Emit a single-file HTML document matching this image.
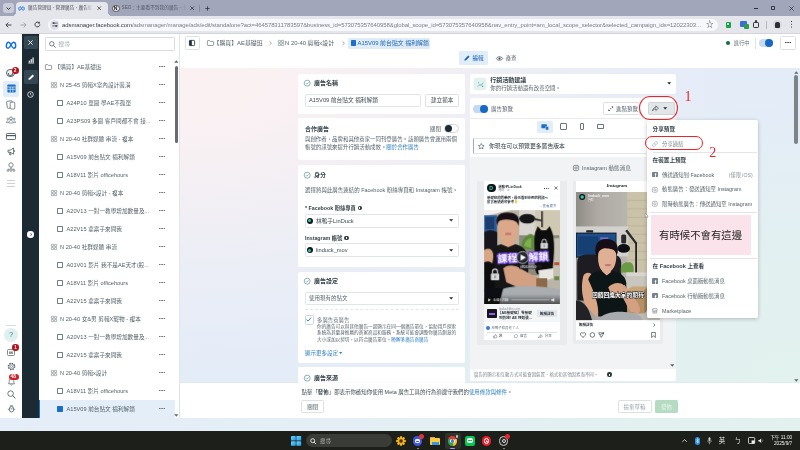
<!DOCTYPE html>
<html lang="zh-Hant">
<head>
<meta charset="utf-8">
<title>廣告管理員</title>
<style>
*{box-sizing:border-box;margin:0;padding:0}
html,body{width:800px;height:450px;overflow:hidden;background:#fff}
body{position:relative;font-family:"Liberation Sans","Noto Sans CJK TC",sans-serif;font-size:5.8px;color:#56636b;line-height:1}
.a{position:absolute}
.t{position:absolute;white-space:nowrap;line-height:8px;height:8px}
.b{font-weight:700;color:#36434b}
svg{position:absolute;overflow:visible}
/* browser chrome */
#tabbar{left:0;top:0;width:800px;height:16px;background:#a2a6bb}
#acttab{left:16px;top:2px;width:92px;height:14px;background:#e5e6eb;border-radius:4px 4px 0 0}
#toolbar{left:0;top:15.5px;width:800px;height:18px;background:#e5e6eb}
#url{left:47.5px;top:18.5px;width:670px;height:12.5px;background:#f7f8fb;border-radius:6.5px}
/* page */
#leftnav{left:0;top:33.5px;width:22px;height:385px;background:#fff}
#darkbar{left:22px;top:33.5px;width:17px;height:385px;background:#1c2b33}
#tree{left:39px;top:33.5px;width:140px;height:385px;background:#fff}
#main{left:179px;top:33.5px;width:621px;height:385px;background:#fff}
#grad{left:179px;top:68px;width:621px;height:318px;
 background:
 radial-gradient(ellipse 560px 300px at 0% 0%,rgba(251,241,242,1) 0%,rgba(251,241,242,.88) 25%,rgba(251,241,242,.35) 65%,rgba(251,241,242,0) 100%),
 radial-gradient(ellipse 440px 300px at 100% 100%,rgba(226,242,238,1) 0%,rgba(226,242,238,.8) 35%,rgba(226,242,238,0) 100%),
 #e4ecf8}
#gradL{display:none}
.card{position:absolute;background:#fff;border-radius:2px}
.inp{position:absolute;background:#fff;border:.6px solid #e1e5e8;border-radius:1.5px}
.btn{position:absolute;background:#fff;border:.6px solid #dde1e4;border-radius:1.5px;text-align:center;white-space:nowrap}
.row{position:absolute;left:39px;width:136px;height:18px}
.row .t{top:5px;font-size:5.65px}
.dots{position:absolute;left:119.5px;top:8.2px;width:6px;height:1.4px;
 background:radial-gradient(circle at .7px .7px,#6a767d .7px,transparent .8px) 0 0/2.3px 1.4px repeat-x}
.ic-sq{position:absolute;top:6.1px;width:5.9px;height:5.7px;border:.55px solid #727e85;border-radius:.8px;border-top-width:1px}
.ic-gr{position:absolute;top:6px;width:5.8px;height:5.8px}
.ic-gr i{position:absolute;width:2.5px;height:2.5px;border:.55px solid #5f6b73;border-radius:.5px}
.ic-gr i:nth-child(2){left:3.3px}.ic-gr i:nth-child(3){top:3.3px}.ic-gr i:nth-child(4){left:3.3px;top:3.3px}
.row svg rect{fill:none;stroke:#66727a;stroke-width:.55}
svg.gr rect{fill:none;stroke:#66727a;stroke-width:.55}
.lnk{color:#2f7fbf}
/* taskbar */
#strip{left:0;top:418px;width:800px;height:13px;background:linear-gradient(90deg,#e5edf8 0%,#e4eff4 50%,#e2f1ee 100%)}
#taskbar{left:0;top:430.500px;width:800px;height:19.500px;background:#1d1f1b}
</style>
</head>
<body>
<div id="w" style="position:absolute;left:0;top:0;width:800px;height:450px;will-change:transform">
<!-- ============ BROWSER CHROME ============ -->
<div class="a" id="tabbar"></div>
<div class="a" id="acttab"></div>
<div class="a" id="toolbar"></div>
<div class="a" style="left:12px;top:11.500px;width:4px;height:4px;background:radial-gradient(circle at 0 0,rgba(229,230,235,0) 3.800px,#e5e6eb 4.200px)"></div>
<div class="a" style="left:108px;top:11.500px;width:4px;height:4px;background:radial-gradient(circle at 100% 0,rgba(229,230,235,0) 3.800px,#e5e6eb 4.200px)"></div>
<div class="a" id="url"></div>

<div class="a" style="left:3px;top:2.5px;width:10.5px;height:10.5px;background:#c9cbd7;border-radius:3px"></div>
<svg style="left:6px;top:6.5px" width="5" height="3" viewBox="0 0 5 3"><path d="M.6 .6L2.5 2.4L4.4 .6" fill="none" stroke="#30333c" stroke-width="1"/></svg>
<svg style="left:18px;top:5.5px" width="7" height="5" viewBox="0 0 14 10"><path d="M1.5 6.5C1.5 3 3 1.5 4.3 1.5C6.5 1.5 8 8.5 10.2 8.5C11.5 8.5 12.5 7.5 12.5 5.5C12.5 3 11.3 1.5 10 1.5C7.5 1.5 6 8.5 3.6 8.5C2.3 8.5 1.5 7.8 1.5 6.5Z" fill="none" stroke="#1877f2" stroke-width="2"/></svg>
<div class="t" style="left:28px;top:4px;font-size:4.7px;color:#4a4d58;width:64px;overflow:hidden">廣告管理員 - 管理廣告 - 廣告組合</div>
<div class="a" style="left:84px;top:3px;width:9px;height:11px;background:linear-gradient(90deg,rgba(229,230,235,0),#e5e6eb)"></div>
<svg style="left:97.3px;top:5.8px" width="4.4" height="4.4" viewBox="0 0 4.4 4.4"><path d="M.4 .4L4 4M4 .4L.4 4" stroke="#30333c" stroke-width="0.75"/></svg>
<div class="a" style="left:112px;top:4.5px;width:7.5px;height:7.5px;border-radius:50%;background:#e9e9ee;border:.5px solid #555"></div>
<div class="t" style="left:113.8px;top:4.3px;font-size:5px;color:#222;font-weight:700">N</div>
<div class="t" style="left:121.5px;top:4px;font-size:4.7px;color:#555968;width:64px;overflow:hidden">SEO：主要看不到我的廣告 - 主題</div>
<div class="a" style="left:178px;top:3px;width:9px;height:11px;background:linear-gradient(90deg,rgba(162,166,187,0),#a2a6bb)"></div>
<svg style="left:190.3px;top:5.8px" width="4.4" height="4.4" viewBox="0 0 4.4 4.4"><path d="M.4 .4L4 4M4 .4L.4 4" stroke="#2c2f38" stroke-width="0.75"/></svg>
<div class="a" style="left:199.3px;top:4.5px;width:.6px;height:7px;background:#8a8ea3"></div>
<svg style="left:204.500px;top:5.500px" width="5" height="5" viewBox="0 0 5 5"><path d="M2.500 .3V4.700M.3 2.500H4.700" stroke="#2c2f38" stroke-width=".75"/></svg>
<div class="a" style="left:753.800px;top:7.800px;width:4.600px;height:.7px;background:#2c2f38"></div>
<div class="a" style="left:770.5px;top:5.8px;width:4.6px;height:4.6px;border:.6px solid #3a3d47;border-radius:.8px"></div>
<svg style="left:788.6px;top:5.5px" width="5" height="5" viewBox="0 0 5 5"><path d="M.4 .4L4.6 4.6M4.6 .4L.4 4.6" stroke="#2c2f38" stroke-width="0.7"/></svg>
<!-- toolbar -->
<svg style="left:5px;top:21.5px" width="7" height="6" viewBox="0 0 7 6"><path d="M6.5 3H1M3.3 .6L.9 3L3.3 5.4" fill="none" stroke="#33353d" stroke-width=".9"/></svg>
<svg style="left:19.5px;top:21.5px" width="7" height="6" viewBox="0 0 7 6"><path d="M.5 3H6M3.7 .6L6.1 3L3.7 5.4" fill="none" stroke="#9a9ca6" stroke-width=".9"/></svg>
<svg style="left:34px;top:21px" width="7" height="7" viewBox="0 0 7 7"><path d="M5.8 3.5A2.4 2.4 0 1 1 5 1.7" fill="none" stroke="#33353d" stroke-width=".95"/><path d="M5.9 .5V2.6H3.8Z" fill="#33353d"/></svg>
<div class="a" style="left:49.5px;top:20px;width:9.5px;height:9.5px;border-radius:50%;background:#dfe1e8"></div>
<svg style="left:51.5px;top:22.3px" width="6" height="5" viewBox="0 0 6 5"><path d="M.3 1.1H5.7M.3 3.9H5.7" stroke="#3b3e48" stroke-width=".7"/><circle cx="1.7" cy="1.1" r=".9" fill="#3b3e48"/><circle cx="4.2" cy="3.9" r=".9" fill="#3b3e48"/></svg>
<div class="t" id="urltxt" style="left:62px;top:20.8px;font-size:6px;color:#7c7f8a;letter-spacing:-.092px"><span style="color:#3d3f48">adsmanager.facebook.com</span>/adsmanager/manage/ads/edit/standalone?act=464578311783597&amp;business_id=573075357640958&amp;global_scope_id=573075357640958&amp;nav_entry_point=am_local_scope_selector&amp;selected_campaign_ids=12022303...</div>
<div class="t" style="left:706px;top:20.5px;font-size:7.5px;color:#33353d">☆</div>
<div class="a" style="left:725.5px;top:21.5px;width:5.5px;height:6px;background:#17a34a;border-radius:1px"></div>
<div class="a" style="left:727.3px;top:23px;width:2px;height:2.4px;background:#bdf0cf"></div>
<div class="a" style="left:739.5px;top:21px;width:7px;height:6px;background:#3b6fd1;border-radius:1px"></div>
<div class="a" style="left:743.5px;top:24px;width:5px;height:5px;background:#2e9b4d;border-radius:1px"></div>
<div class="a" style="left:752.8px;top:21.5px;width:6px;height:6px;border:.9px solid #33353d;border-radius:1.2px"></div>
<div class="a" style="left:754.6px;top:20.3px;width:2.4px;height:2px;background:#33353d;border-radius:1px 1px 0 0"></div>
<div class="a" style="left:766.3px;top:20.5px;width:.7px;height:8.5px;background:#b5b8c4"></div>
<div class="a" style="left:773px;top:20.3px;width:9px;height:9px;border-radius:50%;background:#d9dbe2"></div>
<div class="a" style="left:775.3px;top:21.5px;width:4.5px;height:6.5px;border-radius:2px 2px 1px 1px;background:#2c2e35"></div>
<div class="a" style="left:790.5px;top:21px;width:1.3px;height:7px;background:radial-gradient(circle at .65px .65px,#33353d .65px,transparent .75px) 0 0/1.3px 2.8px repeat-y"></div>
<div class="a" style="left:0;top:32.800px;width:800px;height:.8px;background:#d3d5db"></div>
<!--CHROME-DETAILS-->

<!-- ============ PAGE ============ -->
<div class="a" id="main"></div>
<div class="a" id="grad"></div>
<div class="a" id="gradL"></div>
<div class="a" id="leftnav"></div>
<div class="a" id="darkbar"></div>
<div class="a" id="tree"></div>

<svg style="left:5px;top:40.5px" width="12" height="8.5" viewBox="0 0 14 10"><path d="M1.5 6.5C1.5 3 3 1.5 4.3 1.5C6.5 1.5 8 8.5 10.2 8.5C11.5 8.5 12.5 7.5 12.5 5.5C12.5 3 11.3 1.5 10 1.5C7.5 1.5 6 8.5 3.6 8.5C2.3 8.5 1.5 7.8 1.5 6.5Z" fill="none" stroke="#1470e0" stroke-width="1.7"/></svg>
<div class="a" style="left:6px;top:68.5px;width:8.5px;height:8.5px;border-radius:50%;border:.7px solid #59656c;background:#eef0f2"></div>
<div class="a" style="left:8px;top:72.5px;width:4.5px;height:3px;border-radius:0 0 3px 3px;border:.6px solid #59656c;border-top:0"></div>
<div class="a" style="left:11.5px;top:66.800px;width:7px;height:7px;border-radius:50%;background:#b5121b"></div>
<div class="t" style="left:13.700px;top:67px;font-size:4.800px;color:#fff;font-weight:700">2</div>
<div class="a" style="left:3px;top:81px;width:16px;height:15.5px;border-radius:2px;background:#e1edf8"></div>
<svg style="left:6.5px;top:84px" width="9" height="9" viewBox="0 0 9 9"><rect x=".4" y=".4" width="8.2" height="8.2" rx=".8" fill="#1b6fc9"/><path d="M.4 3H8.6M.4 5.3H8.6M3.2 3V8.6M5.9 3V8.6" stroke="#e1edf8" stroke-width=".7"/></svg>
<svg style="left:6px;top:99.5px" width="10" height="10" viewBox="0 0 10 10"><rect x="1" y="1" width="5.5" height="7" rx=".8" fill="#fff" stroke="#59656c" stroke-width=".75" transform="rotate(-8 4 5)"/><rect x="4.2" y="2.2" width="4.6" height="6.8" rx=".8" fill="#fff" stroke="#59656c" stroke-width=".75"/></svg>
<svg style="left:6px;top:116px" width="10" height="8" viewBox="0 0 10 8"><circle cx="5" cy="2.3" r="1.4" fill="none" stroke="#59656c" stroke-width=".7"/><circle cx="2" cy="3" r="1" fill="none" stroke="#59656c" stroke-width=".6"/><circle cx="8" cy="3" r="1" fill="none" stroke="#59656c" stroke-width=".6"/><path d="M2.6 7C2.6 5.2 3.6 4.6 5 4.6S7.4 5.2 7.4 7ZM.4 6.6C.4 5.4 1 4.9 2 4.9M9.6 6.6C9.6 5.4 9 4.9 8 4.9M.4 6.6H2.4M9.6 6.6H7.6" fill="none" stroke="#59656c" stroke-width=".6"/></svg>
<svg style="left:6px;top:132.5px" width="10" height="7" viewBox="0 0 10 7"><rect x=".45" y=".45" width="9.1" height="6.1" rx=".9" fill="none" stroke="#4c585f" stroke-width=".9"/><path d="M.5 2.6H9.5" stroke="#4c585f" stroke-width="1.2"/></svg>
<svg style="left:6.5px;top:147px" width="9" height="9" viewBox="0 0 9 9"><path d="M1 3.2H3L6.6 1V7.2L3 5.2H1Z" fill="none" stroke="#4c585f" stroke-width=".8"/><path d="M2 5.4L2.8 8H4L3.4 5.4M7.6 3.2V5" fill="none" stroke="#4c585f" stroke-width=".7"/></svg>
<svg style="left:6px;top:162px" width="10" height="10" viewBox="0 0 10 10"><circle cx="5" cy="3" r="2.2" fill="none" stroke="#59656c" stroke-width=".75"/><path d="M5 5.2V7M2 9V7.2H8V9" fill="none" stroke="#59656c" stroke-width=".7"/><circle cx="2" cy="8.6" r=".9" fill="#fff" stroke="#59656c" stroke-width=".6"/><circle cx="5" cy="8.6" r=".9" fill="#fff" stroke="#59656c" stroke-width=".6"/><circle cx="8" cy="8.6" r=".9" fill="#fff" stroke="#59656c" stroke-width=".6"/></svg>
<div class="a" style="left:7.3px;top:180.3px;width:7.5px;height:6.6px;background:linear-gradient(#b8bec2,#b8bec2) 0 0/100% .7px no-repeat,linear-gradient(#b8bec2,#b8bec2) 0 3px/100% .7px no-repeat,linear-gradient(#b8bec2,#b8bec2) 0 5.9px/100% .7px no-repeat"></div>
<div class="a" style="left:6px;top:325px;width:10px;height:.7px;background:#d9dde0"></div>
<div class="a" style="left:4px;top:328px;width:14px;height:14px;border-radius:50%;background:#dff0ee"></div>
<div class="t" style="left:9px;top:331px;font-size:7.5px;color:#3a8c9a">?</div>
<svg style="left:6.5px;top:348px" width="9" height="8" viewBox="0 0 9 8"><rect x=".5" y="1.5" width="7" height="6" rx="1" fill="#fff" stroke="#59656c" stroke-width=".75"/><rect x="2" y="3.5" width="4" height="2.4" fill="#8c969c"/></svg>
<div class="a" style="left:12px;top:344px;width:6.5px;height:6.5px;border-radius:50%;background:#b3141d"></div>
<div class="t" style="left:14.200px;top:343.900px;font-size:4.600px;color:#fff;font-weight:700">1</div>
<svg style="left:6.5px;top:361.5px" width="9" height="9" viewBox="0 0 9 9"><circle cx="4.5" cy="4.5" r="3.2" fill="none" stroke="#59656c" stroke-width="1.3" stroke-dasharray="1.4 1.1"/><circle cx="4.5" cy="4.5" r="2.6" fill="#fff" stroke="#59656c" stroke-width=".7"/><circle cx="4.5" cy="4.5" r="1.1" fill="none" stroke="#59656c" stroke-width=".6"/></svg>
<svg style="left:6.5px;top:377px" width="9" height="9" viewBox="0 0 9 9"><path d="M1.5 6.8C2.3 5.8 2.2 4.8 2.3 3.6C2.4 2.2 3.3 1.4 4.5 1.4S6.6 2.2 6.7 3.6C6.8 4.8 6.7 5.8 7.5 6.8ZM3.6 7.6C3.9 8.3 5.1 8.3 5.4 7.6" fill="none" stroke="#59656c" stroke-width=".75"/></svg>
<div class="a" style="left:8.5px;top:373.5px;width:10.5px;height:6.2px;border-radius:3.1px;background:#c9232d"></div>
<div class="t" style="left:10.600px;top:373.100px;font-size:4.700px;color:#fff;font-weight:700">48</div>
<svg style="left:6.5px;top:390px" width="9" height="9" viewBox="0 0 9 9"><circle cx="3.6" cy="3.6" r="2.8" fill="none" stroke="#4c585f" stroke-width=".8"/><path d="M5.7 5.7L8.4 8.4" stroke="#4c585f" stroke-width=".9"/></svg>
<svg style="left:6.5px;top:404px" width="9" height="9" viewBox="0 0 9 9"><ellipse cx="4.5" cy="5.3" rx="2.2" ry="2.7" fill="none" stroke="#4c585f" stroke-width=".8"/><path d="M3 2.6C3 1 6 1 6 2.6M.8 5.3H2.3M6.7 5.3H8.2M3.5 4.8H5.5" fill="none" stroke="#4c585f" stroke-width=".7"/></svg>
<!-- dark bar -->
<div class="a" style="left:24px;top:35.5px;width:13.5px;height:13.5px;border-radius:1.5px;background:#344854"></div>
<svg style="left:28.3px;top:40px" width="5" height="5" viewBox="0 0 5 5"><path d="M.4 .4L4.6 4.6M4.6 .4L.4 4.6" stroke="#fff" stroke-width=".9"/></svg>
<svg style="left:27.5px;top:56.5px" width="6.5" height="6.5" viewBox="0 0 6.5 6.5"><path d="M.3 6.2H6.2" stroke="#fff" stroke-width=".6"/><rect x=".7" y="3.7" width="1.2" height="2" fill="#fff"/><rect x="2.6" y="2.2" width="1.2" height="3.5" fill="#fff"/><rect x="4.5" y=".5" width="1.2" height="5.2" fill="#fff"/></svg>
<div class="a" style="left:24px;top:70px;width:13.5px;height:14px;border-radius:1.5px;background:#344854"></div>
<svg style="left:27.5px;top:73.8px" width="6.5" height="6.5" viewBox="0 0 6.5 6.5"><path d="M.4 6.1L.9 4.2L4.6 .5L6 1.9L2.3 5.6Z" fill="#fff"/></svg>
<svg style="left:27.3px;top:91px" width="7" height="7" viewBox="0 0 7 7"><circle cx="3.5" cy="3.5" r="2.8" fill="none" stroke="#fff" stroke-width=".75"/><path d="M3.5 1.9V3.6L4.6 4.3" fill="none" stroke="#fff" stroke-width=".65"/></svg>
<div class="a" style="left:27.3px;top:231.3px;width:6.4px;height:6.4px;border-radius:50%;background:#fff"></div>
<svg style="left:29.6px;top:233px" width="2.4" height="3" viewBox="0 0 2.4 3"><path d="M.4 .3L1.9 1.5L.4 2.7" fill="none" stroke="#1c2b33" stroke-width=".7"/></svg>
<!--LEFTNAV-->

<div class="inp" style="left:44.5px;top:37px;width:130.5px;height:13.5px;border-color:#d9dde0"></div>
<svg style="left:49px;top:40.5px" width="7" height="7" viewBox="0 0 7 7"><circle cx="2.8" cy="2.8" r="2.2" fill="none" stroke="#4c585f" stroke-width=".75"/><path d="M4.4 4.4L6.6 6.6" stroke="#4c585f" stroke-width=".85"/></svg>
<div class="t" style="left:58.5px;top:39.8px;color:#a2abb1">搜尋</div>
<div class="row" style="top:58px"><svg style="left:5.5px;top:6px" width="7" height="6" viewBox="0 0 7 6"><path d="M.4 1.2Q.4 .5 1.1 .5H2.6L3.4 1.4H5.9Q6.6 1.4 6.6 2.1V4.8Q6.6 5.5 5.9 5.5H1.1Q.4 5.5 .4 4.8Z" fill="none" stroke="#5f6b73" stroke-width=".65"/></svg><div class="t" style="left:15.5px">【購買】AE基礎班</div><div class="dots"></div></div>
<div class="row" style="top:76px"><svg style="left:11.5px;top:6px" width="6" height="6" viewBox="0 0 6 6"><rect x=".3" y=".3" width="2.2" height="2.2" rx=".5"/><rect x="3.5" y=".3" width="2.2" height="2.2" rx=".5"/><rect x=".3" y="3.5" width="2.2" height="2.2" rx=".5"/><rect x="3.5" y="3.5" width="2.2" height="2.2" rx=".5"/></svg><div class="t" style="left:21px">N 25-45 剪輯X室內設計裝潢</div><div class="dots"></div></div>
<div class="row" style="top:94px"><div class="ic-sq" style="left:18.100px"></div><div class="t" style="left:27.5px">A24P10 單圖 學AE不孤單</div><div class="dots"></div></div>
<div class="row" style="top:112px"><div class="ic-sq" style="left:18.100px"></div><div class="t" style="left:27.5px">A23PS09 多圖 客戶問都不會 接...</div><div class="dots"></div></div>
<div class="row" style="top:130px"><svg style="left:11.5px;top:6px" width="6" height="6" viewBox="0 0 6 6"><rect x=".3" y=".3" width="2.2" height="2.2" rx=".5"/><rect x="3.5" y=".3" width="2.2" height="2.2" rx=".5"/><rect x=".3" y="3.5" width="2.2" height="2.2" rx=".5"/><rect x="3.5" y="3.5" width="2.2" height="2.2" rx=".5"/></svg><div class="t" style="left:21px">N 20-40 社群媒體 串流 - 複本</div><div class="dots"></div></div>
<div class="row" style="top:148px"><div class="ic-sq" style="left:18.100px"></div><div class="t" style="left:27.5px">A15V09 前台貼文 福利解鎖</div><div class="dots"></div></div>
<div class="row" style="top:166px"><div class="ic-sq" style="left:18.100px"></div><div class="t" style="left:27.5px">A18V11 影片 officehours</div><div class="dots"></div></div>
<div class="row" style="top:184px"><svg style="left:11.5px;top:6px" width="6" height="6" viewBox="0 0 6 6"><rect x=".3" y=".3" width="2.2" height="2.2" rx=".5"/><rect x="3.5" y=".3" width="2.2" height="2.2" rx=".5"/><rect x=".3" y="3.5" width="2.2" height="2.2" rx=".5"/><rect x="3.5" y="3.5" width="2.2" height="2.2" rx=".5"/></svg><div class="t" style="left:21px">N 20-40 剪輯x設計 - 複本</div><div class="dots"></div></div>
<div class="row" style="top:202px"><div class="ic-sq" style="left:18.100px"></div><div class="t" style="left:27.5px">A20V13 一對一教學增加數量及...</div><div class="dots"></div></div>
<div class="row" style="top:220px"><div class="ic-sq" style="left:18.100px"></div><div class="t" style="left:27.5px">A22V15 拿案子來問我</div><div class="dots"></div></div>
<div class="row" style="top:238px"><svg style="left:11.5px;top:6px" width="6" height="6" viewBox="0 0 6 6"><rect x=".3" y=".3" width="2.2" height="2.2" rx=".5"/><rect x="3.5" y=".3" width="2.2" height="2.2" rx=".5"/><rect x=".3" y="3.5" width="2.2" height="2.2" rx=".5"/><rect x="3.5" y="3.5" width="2.2" height="2.2" rx=".5"/></svg><div class="t" style="left:21px">N 20-40 社群媒體 串流</div><div class="dots"></div></div>
<div class="row" style="top:256px"><div class="ic-sq" style="left:18.100px"></div><div class="t" style="left:27.5px">A01V01 影片 我不是AE天才(殺...</div><div class="dots"></div></div>
<div class="row" style="top:274px"><div class="ic-sq" style="left:18.100px"></div><div class="t" style="left:27.5px">A18V11 影片 officehours</div><div class="dots"></div></div>
<div class="row" style="top:292px"><div class="ic-sq" style="left:18.100px"></div><div class="t" style="left:27.5px">A22V15 拿案子來問我</div><div class="dots"></div></div>
<div class="row" style="top:310px"><svg style="left:11.5px;top:6px" width="6" height="6" viewBox="0 0 6 6"><rect x=".3" y=".3" width="2.2" height="2.2" rx=".5"/><rect x="3.5" y=".3" width="2.2" height="2.2" rx=".5"/><rect x=".3" y="3.5" width="2.2" height="2.2" rx=".5"/><rect x="3.5" y="3.5" width="2.2" height="2.2" rx=".5"/></svg><div class="t" style="left:21px">N 20-40 女&amp;男 剪輯X寵物 - 複本</div><div class="dots"></div></div>
<div class="row" style="top:328px"><div class="ic-sq" style="left:18.100px"></div><div class="t" style="left:27.5px">A20V13 一對一教學增加數量及...</div><div class="dots"></div></div>
<div class="row" style="top:346px"><div class="ic-sq" style="left:18.100px"></div><div class="t" style="left:27.5px">A22V15 拿案子來問我</div><div class="dots"></div></div>
<div class="row" style="top:364px"><svg style="left:11.5px;top:6px" width="6" height="6" viewBox="0 0 6 6"><rect x=".3" y=".3" width="2.2" height="2.2" rx=".5"/><rect x="3.5" y=".3" width="2.2" height="2.2" rx=".5"/><rect x=".3" y="3.5" width="2.2" height="2.2" rx=".5"/><rect x="3.5" y="3.5" width="2.2" height="2.2" rx=".5"/></svg><div class="t" style="left:21px">N 20-40 剪輯x設計</div><div class="dots"></div></div>
<div class="row" style="top:382px"><div class="ic-sq" style="left:18.100px"></div><div class="t" style="left:27.5px">A18V11 影片 officehours</div><div class="dots"></div></div>
<div class="row" style="top:400px;background:#e3eef9;height:18.5px"><div class="a" style="left:0;top:0;width:1px;height:18.5px;background:#1b6fc9"></div><div class="ic-sq" style="left:18.100px;background:#1b6fc9;border-color:#1b6fc9"></div><div class="t" style="left:27.5px">A15V09 前台貼文 福利解鎖</div><div class="dots"></div></div>

<div class="a" style="left:174.500px;top:66px;width:3.200px;height:77px;border-radius:1.600px;background:#666c71"></div>
<svg style="left:173.8px;top:60px" width="4.6" height="3" viewBox="0 0 4.6 3"><path d="M.2 2.8L2.3 .3L4.4 2.8Z" fill="#5c6469"/></svg>
<svg style="left:173.8px;top:413.5px" width="4.6" height="3" viewBox="0 0 4.6 3"><path d="M.2 .2L2.3 2.7L4.4 .2Z" fill="#5c6469"/></svg>
<div class="a" style="left:179px;top:33.5px;width:.6px;height:385px;background:#e3e6e8"></div>
<!--TREE-->

<div class="btn" style="left:184.5px;top:36px;width:15px;height:14px"></div>
<svg style="left:189px;top:40px" width="6" height="6" viewBox="0 0 6 6"><rect x=".4" y=".4" width="5.2" height="5.2" rx=".8" fill="#fff" stroke="#1c2b33" stroke-width=".8"/><rect x=".4" y=".4" width="2.4" height="5.2" fill="#1c2b33"/></svg>
<svg style="left:206.5px;top:40px" width="7" height="6" viewBox="0 0 7 6"><path d="M.4 1.2Q.4 .5 1.1 .5H2.6L3.4 1.4H5.9Q6.6 1.4 6.6 2.1V4.8Q6.6 5.5 5.9 5.5H1.1Q.4 5.5 .4 4.8Z" fill="none" stroke="#5f6b73" stroke-width=".65"/></svg>
<div class="t" style="left:213.5px;top:39px;font-size:5.9px">【購買】AE基礎班</div>
<svg style="left:269px;top:41px" width="3" height="4.4" viewBox="0 0 3 4.4"><path d="M.5 .4L2.4 2.2L.5 4" fill="none" stroke="#7b868c" stroke-width=".7"/></svg>
<svg class="gr" style="left:277.5px;top:40px" width="6" height="6" viewBox="0 0 6 6"><rect x=".3" y=".3" width="2.2" height="2.2" rx=".5"/><rect x="3.5" y=".3" width="2.2" height="2.2" rx=".5"/><rect x=".3" y="3.5" width="2.2" height="2.2" rx=".5"/><rect x="3.5" y="3.5" width="2.2" height="2.2" rx=".5"/></svg>
<div class="t" style="left:285px;top:39px;font-size:5.9px">N 20-40 剪輯x設計</div>
<svg style="left:341.5px;top:41px" width="3" height="4.4" viewBox="0 0 3 4.4"><path d="M.5 .4L2.4 2.2L.5 4" fill="none" stroke="#7b868c" stroke-width=".7"/></svg>
<div class="a" style="left:348px;top:37.5px;width:82px;height:11px;border-radius:1.5px;background:#dfecf8"></div>
<div class="a" style="left:350.5px;top:40.3px;width:5.2px;height:5.4px;border-radius:.8px;background:#1b6fc9"></div>
<div class="t" style="left:357.5px;top:39px;font-size:5.9px;color:#1a64b4">A15V09 前台貼文 福利解鎖</div>
<div class="a" style="left:725.5px;top:40.8px;width:4.4px;height:4.4px;border-radius:50%;background:#0f6b46"></div>
<div class="t" style="left:733.7px;top:39px;font-size:5.3px;color:#6a767d">進行中</div>
<div class="a" style="left:755.3px;top:37.5px;width:.6px;height:11px;background:#dfe3e6"></div>
<div class="a" style="left:758.8px;top:38.7px;width:14.4px;height:8.6px;border-radius:4.3px;background:#c5daf1"></div>
<div class="a" style="left:764.8px;top:38.8px;width:8.4px;height:8.4px;border-radius:50%;background:#1668c4"></div>
<div class="btn" style="left:780px;top:36px;width:15.5px;height:14px"></div>
<div class="a" style="left:784.8px;top:42.3px;width:6px;height:1.4px;background:radial-gradient(circle at .7px .7px,#37444c .7px,transparent .8px) 0 0/2.3px 1.4px repeat-x"></div>
<!-- tabs -->
<div class="a" style="left:458.5px;top:51px;width:29.5px;height:14px;border-radius:1.5px;background:#e1edf8"></div>
<svg style="left:463.5px;top:55.3px" width="6" height="6" viewBox="0 0 6.5 6.5"><path d="M.4 6.1L.9 4.2L4.6 .5L6 1.9L2.3 5.6Z" fill="#1a64b4"/></svg>
<div class="t" style="left:472.5px;top:54px;font-size:5.6px;color:#1a64b4">編輯</div>
<svg style="left:495.5px;top:55.8px" width="7" height="5" viewBox="0 0 7 5"><path d="M.3 2.5C1.8 .2 5.2 .2 6.7 2.5C5.2 4.8 1.8 4.8 .3 2.5Z" fill="none" stroke="#37444c" stroke-width=".7"/><circle cx="3.5" cy="2.5" r="1.1" fill="#37444c"/></svg>
<div class="t" style="left:505.5px;top:54px;font-size:5.6px;color:#56636b">審查</div>
<!--HEADER-->

<!-- card 1 -->
<div class="card" style="left:297.5px;top:73.5px;width:167.5px;height:40.5px"></div>
<svg style="left:303.8px;top:80.3px" width="6.4" height="6.4" viewBox="0 0 6.4 6.4"><circle cx="3.2" cy="3.2" r="3" fill="none" stroke="#3f7f86" stroke-width=".6"/><path d="M1.9 3.3L2.8 4.2L4.5 2.3" fill="none" stroke="#3f7f86" stroke-width=".6"/></svg>
<div class="t b" style="left:314px;top:79.3px;font-size:6px">廣告名稱</div>
<div class="inp" style="left:304.5px;top:93.5px;width:116px;height:13.5px"></div>
<div class="t" style="left:309px;top:96.3px;font-size:5.7px;color:#3e4b53">A15V09 前台貼文 福利解鎖</div>
<div class="btn" style="left:424.5px;top:93.5px;width:34.5px;height:13.5px"></div>
<div class="t" style="left:431px;top:96.3px;font-size:5.6px;color:#3e4b53">建立範本</div>
<!-- card 2 -->
<div class="card" style="left:297.5px;top:117.8px;width:167.5px;height:42.5px"></div>
<div class="t b" style="left:305px;top:124.5px;font-size:6px">合作廣告</div>
<div class="t" style="left:430px;top:124.5px;font-size:5.5px">關閉</div>
<div class="a" style="left:443.5px;top:124px;width:15.5px;height:9px;border-radius:4.5px;background:#fff;border:.6px solid #d0d6da"></div>
<div class="a" style="left:445px;top:125px;width:7px;height:7px;border-radius:50%;background:#1c2b33"></div>
<div class="t" style="left:305px;top:135px;font-size:5.430px">與創作者、品牌和其他商家一同刊登廣告。該類廣告會運用兩個</div>
<div class="t" style="left:305px;top:143.200px;font-size:5.430px">帳號的訊號來提升行銷活動成效。<span class="lnk">關於合作廣告</span></div>
<!-- card 3 -->
<div class="card" style="left:297.5px;top:165px;width:167.5px;height:101.5px"></div>
<svg style="left:303.8px;top:172.3px" width="6.4" height="6.4" viewBox="0 0 6.4 6.4"><circle cx="3.2" cy="3.2" r="3" fill="none" stroke="#3f7f86" stroke-width=".6"/><path d="M1.9 3.3L2.8 4.2L4.5 2.3" fill="none" stroke="#3f7f86" stroke-width=".6"/></svg>
<div class="t b" style="left:314px;top:171.3px;font-size:6px">身分</div>
<div class="t" style="left:305px;top:185.500px;font-size:5.470px">選擇將與此廣告連結的 Facebook 粉絲專頁和 Instagram 帳號。</div>
<div class="t b" style="left:305px;top:204px;font-size:5.300px">* Facebook 粉絲專頁</div>
<div class="a" style="left:357.5px;top:205.8px;width:4.4px;height:4.4px;border-radius:50%;background:#2a3740"></div><div class="a" style="left:359.35px;top:207.2px;width:.7px;height:2.2px;background:#fff"></div>
<div class="inp" style="left:304.5px;top:213.8px;width:154.5px;height:13.8px"></div>
<div class="a" style="left:306.7px;top:217.6px;width:6px;height:6px;border-radius:50%;background:#10181c"></div><div class="a" style="left:308.1px;top:219px;width:3.2px;height:3.2px;border-radius:50%;background:#35c9b3"></div>
<div class="t" style="left:316px;top:216.6px;font-size:5.7px;color:#3e4b53">林鴨子LinDuck</div>
<svg style="left:449.3px;top:219.4px" width="4.4" height="2.6" viewBox="0 0 4.4 2.6"><path d="M.2 .2H4.2L2.2 2.4Z" fill="#1c2b33"/></svg>
<div class="t b" style="left:305px;top:234px;font-size:5.300px">Instagram 帳號</div>
<div class="a" style="left:344.4px;top:235.8px;width:4.4px;height:4.4px;border-radius:50%;background:#2a3740"></div><div class="a" style="left:346.25px;top:237.2px;width:.7px;height:2.2px;background:#fff"></div>
<div class="inp" style="left:304.5px;top:243.3px;width:154.5px;height:13.8px"></div>
<div class="a" style="left:306.7px;top:247.1px;width:6px;height:6px;border-radius:50%;background:#10181c"></div><div class="a" style="left:308.1px;top:248.5px;width:3.2px;height:3.2px;border-radius:50%;background:#35c9b3"></div>
<div class="t" style="left:316px;top:246.1px;font-size:5.7px;color:#3e4b53">linduck_mov</div>
<svg style="left:449.3px;top:248.9px" width="4.4" height="2.6" viewBox="0 0 4.4 2.6"><path d="M.2 .2H4.2L2.2 2.4Z" fill="#1c2b33"/></svg>
<!-- card 4 -->
<div class="card" style="left:297.5px;top:271.5px;width:167.5px;height:91px"></div>
<svg style="left:303.8px;top:278.3px" width="6.4" height="6.4" viewBox="0 0 6.4 6.4"><circle cx="3.2" cy="3.2" r="3" fill="none" stroke="#3f7f86" stroke-width=".6"/><path d="M1.9 3.3L2.8 4.2L4.5 2.3" fill="none" stroke="#3f7f86" stroke-width=".6"/></svg>
<div class="t b" style="left:314px;top:277.3px;font-size:6px">廣告設定</div>
<div class="inp" style="left:304.5px;top:291.5px;width:154.5px;height:13.8px"></div>
<div class="t" style="left:309px;top:294.4px;font-size:5.5px">使用現有的貼文</div>
<svg style="left:449.3px;top:297.2px" width="4.4" height="2.6" viewBox="0 0 4.4 2.6"><path d="M.2 .2H4.2L2.2 2.4Z" fill="#1c2b33"/></svg>
<div class="a" style="left:304.5px;top:309px;width:154.5px;height:0;border-top:.6px dashed #e4e7ea"></div>
<div class="inp" style="left:304.5px;top:315px;width:9.2px;height:9.5px;border-color:#cfd5d9"></div>
<svg style="left:306.3px;top:317.3px" width="5.6" height="4.8" viewBox="0 0 5.6 4.8"><path d="M.5 2.5L2 4.1L5.1 .6" fill="none" stroke="#1b6fc9" stroke-width=".9"/></svg>
<div class="t" style="left:317px;top:315.6px;font-size:5.4px;color:#6d7980">多廣告商廣告</div>
<div class="t" style="left:317px;top:322.600px;font-size:4.650px">你的廣告可以與其他廣告一起顯示在同一個廣告單位，協助用戶探索</div>
<div class="t" style="left:317px;top:329.100px;font-size:4.650px">系統為其量身推薦的商家商品和服務。系統可能會調整你廣告創意的</div>
<div class="t" style="left:317px;top:335.600px;font-size:4.650px">大小或加以剪切，以符合廣告單位。<span class="lnk">瞭解多廣告商廣告</span></div>
<div class="t lnk" style="left:305px;top:349px;font-size:5.5px">顯示更多設定</div>
<svg style="left:339.3px;top:352px" width="3.4" height="2.2" viewBox="0 0 3.4 2.2"><path d="M.1 .1H3.3L1.7 2.1Z" fill="#2f7fbf"/></svg>
<!-- card 5 -->
<div class="card" style="left:297.5px;top:367.3px;width:167.5px;height:20px"></div>
<svg style="left:303.8px;top:374.8px" width="6.4" height="6.4" viewBox="0 0 6.4 6.4"><circle cx="3.2" cy="3.2" r="3" fill="none" stroke="#3f7f86" stroke-width=".6"/><path d="M1.9 3.3L2.8 4.2L4.5 2.3" fill="none" stroke="#3f7f86" stroke-width=".6"/></svg>
<div class="t b" style="left:314px;top:373.8px;font-size:6px">廣告來源</div>
<!--CARDS-->

<!-- right col card 1 -->
<div class="card" style="left:470px;top:73.5px;width:205.8px;height:20px"></div>
<div class="a" style="left:474px;top:77.7px;width:11.8px;height:12.5px;border-radius:1.5px;background:#e2f2ee"></div>
<svg style="left:476.5px;top:80.5px" width="7" height="7" viewBox="0 0 7 7"><path d="M.8 5.6L3 3.4L4 4.6L6.2 1.6" fill="none" stroke="#3a8c9a" stroke-width=".6"/><circle cx="5.6" cy="5.4" r=".6" fill="#3a8c9a"/><circle cx="1.6" cy="1.8" r=".5" fill="#3a8c9a"/></svg>
<div class="t b" style="left:490.3px;top:75.5px;font-size:6px">行銷活動建議</div>
<div class="t" style="left:490.3px;top:83.600px;font-size:5.450px">你的行銷活動還有改善空間。</div>
<svg style="left:666.8px;top:82.2px" width="4.4" height="2.6" viewBox="0 0 4.4 2.6"><path d="M.2 .2H4.2L2.2 2.4Z" fill="#1c2b33"/></svg>
<!-- right col card 2 -->
<div class="card" style="left:470px;top:97.8px;width:205.8px;height:283.2px"></div>
<div class="a" style="left:473.3px;top:104.7px;width:14.5px;height:8.6px;border-radius:4.3px;background:#c5daf1"></div>
<div class="a" style="left:479.6px;top:104.8px;width:8.4px;height:8.4px;border-radius:50%;background:#1668c4"></div>
<div class="t" style="left:491px;top:105px;font-size:5.5px">廣告預覽</div>
<div class="btn" style="left:602.5px;top:101.5px;width:37.5px;height:13.8px"></div>
<svg style="left:607.5px;top:105.8px" width="5.5" height="5.5" viewBox="0 0 5.5 5.5"><path d="M3.3 .4H5.1V2.2ZM2.2 5.1H.4V3.3Z" fill="#1c2b33"/><circle cx="2.75" cy="2.75" r=".6" fill="#1c2b33"/></svg>
<div class="t" style="left:616px;top:104.5px;font-size:5.5px">進階預覽</div>
<div class="a" style="left:647.5px;top:101.5px;width:27px;height:13.8px;border-radius:1.5px;background:#e2e6e9;border:.6px solid #d0d5d9"></div>
<svg style="left:652px;top:105.2px" width="7" height="6.4" viewBox="0 0 7 6.4"><path d="M.6 5.8C.8 3.6 2 2.6 3.8 2.5V.8L6.5 3.2L3.8 5.5V3.9C2.4 3.9 1.4 4.5 .6 5.8Z" fill="none" stroke="#37444c" stroke-width=".65" stroke-linejoin="round"/></svg>
<svg style="left:663.2px;top:107.2px" width="4.4" height="2.6" viewBox="0 0 4.4 2.6"><path d="M.2 .2H4.2L2.2 2.4Z" fill="#1c2b33"/></svg>
<div class="a" style="left:470px;top:117.8px;width:205.8px;height:.6px;background:#e8ebed"></div>
<div class="a" style="left:537px;top:121px;width:15.5px;height:11.8px;border-radius:1.5px;background:#e1edf8"></div>
<svg style="left:541px;top:123.8px" width="8" height="6.4" viewBox="0 0 8 6.4"><rect x=".35" y=".35" width="5.6" height="3.9" rx=".5" fill="#1b6fc9"/><rect x="4.6" y="2.4" width="3" height="3.6" rx=".5" fill="#1b6fc9" stroke="#e1edf8" stroke-width=".5"/></svg>
<div class="a" style="left:560.3px;top:123.3px;width:6.4px;height:6.4px;border:.55px solid #6a767d;border-radius:1px"></div>
<div class="a" style="left:580.2px;top:122.8px;width:3.8px;height:7px;border:.55px solid #6a767d;border-radius:1px"></div>
<div class="a" style="left:597px;top:124.3px;width:7px;height:4.4px;border:.55px solid #6a767d;border-radius:.9px"></div>
</g><!-- banner -->
<div class="a" style="left:473.3px;top:137.8px;width:199px;height:16.4px;background:#fff;border:.6px solid #e4e7ea;border-left:1.1px solid #a7a5d4;border-radius:1px"></div>
<svg style="left:478px;top:142.6px" width="6.6" height="6.4" viewBox="0 0 6.6 6.4"><path d="M3.3 .5L4.15 2.35L6.15 2.6L4.65 3.95L5.05 5.95L3.3 4.95L1.55 5.95L1.95 3.95L.45 2.6L2.45 2.35Z" fill="none" stroke="#37444c" stroke-width=".55" stroke-linejoin="round"/></svg>
<div class="t" style="left:489px;top:142px;font-size:5.85px;color:#2f3c44">你現在可以預覽更多廣告版本</div>
<!-- preview stage -->
<div class="a" style="left:470px;top:156.5px;width:205.8px;height:212px;background:#f2f3f4"></div>
<svg style="left:573px;top:165px" width="6" height="6" viewBox="0 0 6 6"><rect x=".35" y=".35" width="5.3" height="5.3" rx="1.4" fill="none" stroke="#4c585f" stroke-width=".6"/><circle cx="3" cy="3" r="1.2" fill="none" stroke="#4c585f" stroke-width=".55"/><circle cx="4.5" cy="1.5" r=".35" fill="#4c585f"/></svg>
<div class="t" style="left:582px;top:164px;font-size:5.6px">Instagram 動態消息</div>
<!-- FB mock -->
<div class="a" style="left:476.5px;top:180.5px;width:90.5px;height:164px;border-radius:2px;background:#eaebed"></div>
<div class="a" style="left:483.8px;top:181px;width:76px;height:159px;background:#fff"></div>
<div class="a" style="left:486.8px;top:183.5px;width:8.8px;height:8.8px;border-radius:50%;background:#0d1417"></div>
<div class="t" style="left:489.3px;top:184px;font-size:5.2px;font-weight:700;color:#33d1b4;font-family:'Liberation Sans',sans-serif">D</div>
<div class="t" style="left:498.2px;top:182.5px;font-size:3.400px;font-weight:700;color:#1f2a30">林鴨子LinDuck</div>
<div class="t" style="left:498.2px;top:186.2px;font-size:3px;color:#8a949a">贊助 · ⚙</div>
<div class="a" style="left:543.8px;top:187.5px;width:5px;height:1.1px;background:radial-gradient(circle at .55px .55px,#3a444a .55px,transparent .65px) 0 0/1.9px 1.1px repeat-x"></div>
<svg style="left:553.6px;top:186px" width="4" height="4" viewBox="0 0 4 4"><path d="M.4 .4L3.6 3.6M3.6 .4L.4 3.6" stroke="#1f2a30" stroke-width=".6"/></svg>
<div class="t" style="left:487px;top:193.6px;font-size:3.400px;font-weight:700;color:#27323a">基礎班的同學們，最近看到你們的回饋～</div>
<div class="t" style="left:487px;top:198.1px;font-size:3.400px;font-weight:700;color:#27323a">留言區通通可參考<span style="color:#f0b429">👇</span></div>
<div class="t" style="left:539.5px;top:202.2px;font-size:3.5px;color:#5f7f9f">...查看更多</div>

<svg style="left:483.8px;top:209.8px" width="76" height="94.2" viewBox="483.8 209.8 76 94.2">
<defs><clipPath id="cfb"><rect x="483.8" y="209.8" width="76" height="94.2"/></clipPath>
<filter id="bl" x="-5%" y="-5%" width="110%" height="110%"><feGaussianBlur stdDeviation=".35"/></filter><linearGradient id="gfbb" x1="0" y1="0" x2="0" y2="1"><stop offset="0" stop-color="#000" stop-opacity="0"/><stop offset="1" stop-color="#000" stop-opacity=".55"/></linearGradient></defs>
<g clip-path="url(#cfb)"><g filter="url(#bl)">
<rect x="483.8" y="209.8" width="76" height="94.2" fill="#b9b3a2"/>
<rect x="534" y="209.8" width="26" height="60" fill="#cfc8b2"/>
<rect x="519" y="209.800" width="16" height="40" fill="#d8d6cf"/>
<path d="M483.800 209.800H512L483.800 216Z" fill="#f1f0ee"/>
<rect x="483.800" y="215" width="13" height="20" fill="#2a5c9a"/>
<rect x="485" y="217" width="9" height="12" fill="#1c3d6e"/>
<path d="M483.800 232Q490 228 497 232V262H483.800Z" fill="#17181b"/>
<rect x="519" y="235" width="40" height="40" fill="#8d8a7c"/>
<path d="M521 248C521 240 525 236 529 234C532 233 535 236 535 240V250Z" fill="#5d8a3c"/>
<path d="M524 246C524 241 528 238 531 238V248Z" fill="#7fae4e"/>
<rect x="553" y="238" width="7" height="54" fill="#c4c0b2"/><rect x="554" y="262" width="5" height="3" fill="#c0503c"/><rect x="554" y="276" width="5" height="4" fill="#6a8a4a"/>
<path d="M535 232L537.500 226L541 230H546L549.500 226L552 232C554 238 554.500 250 553 262C552 268 553 272 550 274H537C534 270 534.500 262 534.500 254C534.500 246 533.500 238 535 232Z" fill="#0b0b0d"/>
<ellipse cx="527" cy="218.500" rx="8" ry="4.800" fill="#121214"/>
<path d="M535 218L541 219.500V221L535 220Z" fill="#2a2a2c"/>
<rect x="541" y="211" width="1.600" height="16" fill="#2c2c2e"/>
<path d="M496.500 223C495.500 216 499 212.300 506.500 212.300C514 212 519 215 518.800 221C518.800 224 518.500 225 518 226L498 226Z" fill="#141112"/>
<path d="M498 222C499.500 219.500 504 218.800 509 219.500C514 220 517.500 221.500 518 225C518.500 232 517 238 514 241.500L515 247H501L501.500 241C498.500 238 497 232 497.500 224Z" fill="#dba88a"/>
<path d="M505 232.500H511V234.800H505Z" fill="#c47a72"/>
<path d="M489 262C489 250 494 245.500 501 244L508 247L515 244C523 246 528 250 528 262V292H489Z" fill="#121317"/>
<path d="M483.800 250C488 247 492.500 249 493 254C493.500 260 491 268 488 272L483.800 274Z" fill="#d8a585"/>
<path d="M483.800 262C489 260 493 262 494 268V292H483.800Z" fill="#0d0e10"/>
<path d="M503 268C508 264 515 265 520 268L534 276C539 280 541 284 538 287L524 290L506 282Z" fill="#d3a081"/>
<path d="M538 270L553 268V278L540 282Z" fill="#e9e6e0"/>
<rect x="536" y="278" width="11" height="12" fill="#8a6a48"/><rect x="547" y="280" width="13" height="12" fill="#b9b5a8"/>
<path d="M497 291C505 286 520 285 535 286C548 287 556 288 559.800 290V304H497Z" fill="#a9adb1"/>
<path d="M483.800 288H503L499 304H483.800Z" fill="#101114"/>
<!-- banner -->
<g transform="rotate(-3 522 257)" font-family="'Liberation Sans','Noto Sans CJK TC',sans-serif" font-weight="700" font-size="10" fill="#fff" stroke="#6d43d6" stroke-width="2.6" stroke-linejoin="round" paint-order="stroke">
<text x="497.300" y="261">課程</text>
<text x="528.300" y="261">解鎖</text>
</g>
<rect x="519" y="264.800" width="23" height="3.600" rx=".6" fill="#15151a"/>
<text x="520" y="267.700" font-size="3" font-weight="700" fill="#e9e9ee" font-family="'Liberation Sans',sans-serif">#TDCHHSO</text>
<circle cx="522.300" cy="257.300" r="6" fill="#2a2d3a" fill-opacity=".8" stroke="#e8e8ee" stroke-width=".7"/>
<path d="M520.400 254.200L525.800 257.300L520.400 260.400Z" fill="#fff"/>
<!-- locks -->
<path d="M541.800 243V241.200A2.200 2.200 0 0 1 546.200 241.200V243" fill="none" stroke="#e4e4e6" stroke-width="1"/>
<rect x="540.300" y="242.800" width="7.400" height="5.800" rx=".7" fill="#d9d9dc"/>
<rect x="543.600" y="244.600" width=".9" height="2.200" fill="#55555a"/>
<path d="M492.300 273.500V271.400A2.500 2.500 0 0 1 497.300 271.400V273.500" fill="none" stroke="#e4e4e6" stroke-width="1.100"/>
<rect x="490.600" y="273.200" width="8.400" height="6.800" rx=".8" fill="#d9d9dc"/>
<rect x="494.300" y="275.300" width="1" height="2.600" fill="#55555a"/>
<!-- controls -->
<rect x="483.800" y="294" width="76" height="10" fill="url(#gfbb)"/>
<path d="M488 298.200L490.600 299.700L488 301.200Z" fill="#fff"/>
<text x="493.500" y="300.800" font-size="3" font-weight="700" fill="#eee" font-family="'Liberation Sans',sans-serif">0:00 / 7:58</text>
<rect x="511" y="299.300" width="38" height=".8" fill="#cfd2d6" fill-opacity=".7"/>
<path d="M551 299L552.500 299L554 297.800V301.600L552.500 300.400H551Z" fill="#f2f2f2"/>
</g></svg>
<!-- link row -->
<div class="a" style="left:483.8px;top:304px;width:76px;height:18px;background:#f4f5f6"></div>
<div class="a" style="left:487px;top:309px;width:9.500px;height:9.400px;border-radius:1px;background:#17141f"></div>
<div class="a" style="left:488.500px;top:312.500px;width:6.500px;height:2.800px;background:#8b62ea"></div>
<div class="t" style="left:499px;top:304.600px;font-size:3.100px;color:#8a949a">linduckbhs.com</div>
<div class="t" style="left:498px;top:309.300px;font-size:3.600px;font-weight:700;color:#27323a">【AE基礎班】零基礎</div>
<div class="t" style="left:499px;top:314px;font-size:3.600px;font-weight:700;color:#27323a">到剪接! AE 特效後...</div>
<div class="a" style="left:537px;top:310px;width:19.500px;height:7.300px;border-radius:1px;background:#e2e5e9"></div>
<div class="t" style="left:540px;top:309.700px;font-size:3.500px;font-weight:700;color:#27323a">瞭解詳情</div>
<div class="a" style="left:486.400px;top:326.100px;width:4px;height:4px;border-radius:50%;background:#2b7de0"></div>
<div class="t" style="left:491.500px;top:324.100px;font-size:3.400px;color:#6d7980">林鴨子和其他 7 人</div>
<div class="a" style="left:487px;top:332.200px;width:70px;height:.5px;background:#dfe2e5"></div>
<svg style="left:492.500px;top:334.200px" width="4.400" height="4.400" viewBox="0 0 4.400 4.400"><path d="M.4 2H1.400V4H.4ZM1.400 2L2.400 .4C3 .4 3.100 1 2.900 1.800H4C4.200 2.600 3.900 3.500 3.500 4H1.400" fill="none" stroke="#5f6b73" stroke-width=".45" stroke-linejoin="round"/></svg>
<div class="t" style="left:498.800px;top:332.300px;font-size:3.500px;color:#5f6b73">讚</div>
<svg style="left:514px;top:334.200px" width="4.400" height="4.400" viewBox="0 0 4.400 4.400"><path d="M2.200 .5A1.700 1.500 0 1 1 1.500 3.400L.6 3.900L.8 3A1.700 1.500 0 0 1 2.200 .5Z" fill="none" stroke="#5f6b73" stroke-width=".45"/></svg>
<div class="t" style="left:520px;top:332.300px;font-size:3.500px;color:#5f6b73">留言</div>
<svg style="left:538px;top:334.200px" width="4.800" height="4.400" viewBox="0 0 7 6.400"><path d="M.6 5.800C.8 3.600 2 2.600 3.800 2.500V.8L6.500 3.200L3.800 5.500V3.900C2.400 3.900 1.400 4.500 .6 5.800Z" fill="none" stroke="#5f6b73" stroke-width=".7" stroke-linejoin="round"/></svg>
<div class="t" style="left:544.800px;top:332.300px;font-size:3.500px;color:#5f6b73">分享</div>

<!-- IG mock -->
<div class="a" style="left:573.2px;top:180.8px;width:89.5px;height:163.5px;border-radius:2px;background:#eaebed"></div>
<div class="a" style="left:575.8px;top:181px;width:84px;height:159px;background:#fff"></div>
<div class="t" style="left:606.5px;top:182px;font-size:5px;font-style:italic;font-weight:700;color:#2a2f33;font-family:'Liberation Serif',serif;letter-spacing:-.1px">Instagram</div>

<svg style="left:575.8px;top:191.6px" width="84" height="128.300" viewBox="575.800 191.600 84 128.300">
<defs><clipPath id="cig"><rect x="575.800" y="191.600" width="84" height="128.300"/></clipPath>
<linearGradient id="gigw" x1="0" y1="0" x2="1" y2="0"><stop offset="0" stop-color="#8f8b85"/><stop offset=".25" stop-color="#aeaaa3"/><stop offset="1" stop-color="#c4c1bb"/></linearGradient></defs>
<g clip-path="url(#cig)"><g filter="url(#bl)">
<rect x="575.800" y="191.600" width="84" height="128.300" fill="url(#gigw)"/>
<rect x="627" y="191.600" width="33" height="100" fill="#cbc3a9"/>
<path d="M627 200H660M627 208.500H660M627 217H660M627 225.500H660M627 234H660M627 242.500H660M627 251H660M627 259.500H660" stroke="#b9b195" stroke-width=".7"/>
<rect x="575.800" y="226" width="52" height="30" fill="#d2d1ce"/>
<rect x="586" y="229.800" width="7" height="2.300" rx=".6" fill="#222326"/>
<rect x="575.800" y="232.200" width="40.500" height="25" fill="#15171c"/>
<rect x="576.500" y="233.200" width="39" height="23" fill="#1d4f8c"/>
<rect x="578" y="236" width="20" height="18" fill="#173f73"/>
<rect x="600" y="237" width="8" height="2" fill="#7a6cc0"/>
<path d="M577 262Q577 254 587 254H611Q621 254 621 262V300H577Z" fill="#1b1c20"/>
<path d="M595.400 253C594 244 598 238.500 606 238.500C614 238.500 618.500 243 617.500 252L616 256H597Z" fill="#121012"/>
<path d="M598 254C598.500 250 602 247.500 606.500 248C612 248 615.800 250 616 254C616.500 261 614.500 268 610.500 270.500L611.500 275H601.500L602 270.500C598.500 267 597.500 261 598 254Z" fill="#e0b094"/>
<path d="M605 263.600H610.500V265.800H605Z" fill="#c7767a"/>
<path d="M620.500 268C621 264 625 261 628 262C631 261 633.500 264 633.500 268V272H620.500Z" fill="#6b9a44"/>
<ellipse cx="623.500" cy="248" rx="6.300" ry="4.300" fill="#101012"/>
<path d="M625 230.500L627 229L637 242.500L635.300 243.800Z" fill="#2b2b2d"/>
<rect x="635" y="242" width="1.800" height="32" fill="#242426"/>
<rect x="621" y="234" width="5" height="9" rx="1.500" fill="#2a2a2d"/>
<rect x="626" y="272" width="22" height="4" fill="#d9d6cf"/>
<rect x="626" y="276" width="34" height="16" fill="#c9c6be"/>
<path d="M626 290H644V313H626Z" fill="#b59064"/>
<path d="M626 290L632 286H648L644 290Z" fill="#c9a677"/>
<path d="M644 290L648 286V309L644 313Z" fill="#9c7a52"/>
<path d="M583 276C584 272 590 271 592 275L602 300L596 316L586 306C581 296 581 284 583 276Z" fill="#d9a686"/>
<path d="M588 279C590 272 597 270 602 271L606.500 275L611.500 271C619 271 625 275 626 282L627 316H598C599 304 594 292 588 279Z" fill="#111216"/>
<path d="M608 287C612 282 620 281 624 285L628 290C630 294 628 298 624 298L612 296Z" fill="#d7a484"/>
<path d="M624 284L636 300C640 306 641 310 638 313L630 311L622 296Z" fill="#d3a081"/>
<path d="M575.800 300C582 300 588 306 590 314L592 320H575.800Z" fill="#202126"/>
<path d="M598 319.900C602 313 612 311 624 311.500C634 312 641 315 643 319.900Z" fill="#a8abae"/>
</g><circle cx="582" cy="196.600" r="3" fill="#0d1417"/>
<circle cx="582" cy="196.600" r="1.700" fill="#2fcdb2"/>
<text x="587.800" y="196.300" font-size="3.500" font-weight="700" fill="#f4f4f4" font-family="'Liberation Sans',sans-serif">linduck_mov</text>
<text x="587.800" y="200.200" font-size="2.900" fill="#ecebea" font-family="'Liberation Sans','Noto Sans CJK TC',sans-serif">贊助</text>
<text x="591.700" y="296.900" font-size="5.800" font-weight="700" fill="#fff" stroke="#1a1a1a" stroke-width=".9" paint-order="stroke" font-family="'Liberation Sans','Noto Sans CJK TC',sans-serif">回饋回應大家的期待</text>
</g></svg>

<div class="t" style="left:579px;top:320.8px;font-size:3.5px;font-weight:700;color:#27323a">瞭解詳情</div>
<svg style="left:653.2px;top:322.6px" width="2.4" height="4" viewBox="0 0 2.4 4"><path d="M.4 .4L2 2L.4 3.6" fill="none" stroke="#27323a" stroke-width=".6"/></svg>
<svg style="left:579.5px;top:332px" width="26" height="6" viewBox="0 0 26 6"><path d="M3 5.4C1.4 4.2 .4 3.2 .4 2C.4 .6 2.2 .1 3 1.5C3.800 .1 5.600 .6 5.600 2C5.600 3.200 4.600 4.200 3 5.400Z" fill="none" stroke="#1f2a30" stroke-width=".6"/><circle cx="12.400" cy="2.900" r="2.300" fill="none" stroke="#1f2a30" stroke-width=".6"/><path d="M18.600 .8H24L21.300 5.400ZM20.300 2.600L24 .8" fill="none" stroke="#1f2a30" stroke-width=".6" stroke-linejoin="round"/></svg>
<svg style="left:650.8px;top:332px" width="5" height="6" viewBox="0 0 5 6"><path d="M.6 .5H4.400V5.500L2.500 3.900L.6 5.500Z" fill="none" stroke="#1f2a30" stroke-width=".6" stroke-linejoin="round"/></svg>
<!-- stage scroll + footer -->
<svg style="left:669.7px;top:363.7px" width="4.6" height="3" viewBox="0 0 4.6 3"><path d="M.2 .2L2.300 2.700L4.400 .2Z" fill="#5c6469"/></svg>
<div class="t" style="left:474px;top:370.6px;font-size:4.45px;color:#7b868c">廣告的顯示和互動方式可能會因裝置、格式和其他因素而不同。</div>
<div class="a" style="left:607.3px;top:372.3px;width:4.400px;height:4.400px;border-radius:50%;background:#2a3740"></div><div class="a" style="left:609.15px;top:373.7px;width:.7px;height:2.200px;background:#fff"></div>
<!--PREVIEW-->

<div class="a" style="left:179.5px;top:383px;width:620.5px;height:35px;background:#fff;box-shadow:0 -.5px 1.5px rgba(0,0,0,.10)"></div>
<div class="t" style="left:301.5px;top:388.3px;font-size:5.45px;color:#3e4b53">點擊「<b>發佈</b>」即表示你確知你使用 Meta 廣告工具的行為須遵守我們的<span class="lnk">使用條款與條件</span>。</div>
<div class="btn" style="left:301.3px;top:399.8px;width:23.2px;height:13.7px"></div>
<div class="t" style="left:307.3px;top:402.7px;font-size:5.5px">關閉</div>
<div class="btn" style="left:617.5px;top:399.8px;width:34px;height:13.7px"></div>
<div class="t" style="left:623.6px;top:402.7px;font-size:5.500px;color:#98a2a8">捨棄草稿</div>
<div class="a" style="left:655px;top:399.8px;width:23px;height:13.7px;border-radius:1.5px;background:#b5dcc3"></div>
<div class="t" style="left:661px;top:402.7px;font-size:5.5px;color:#e9f6ee">發佈</div>
<!--FOOTER-->

<div class="a" style="left:647px;top:120.2px;width:111px;height:198.300px;background:#fff;border-radius:1.500px;box-shadow:0 1px 4px rgba(0,0,0,.22),0 0 1px rgba(0,0,0,.15)"></div>
<div class="t b" style="left:652.600px;top:125px;font-size:5.600px">分享預覽</div>
<svg style="left:652px;top:141px" width="6" height="6" viewBox="0 0 6 6"><path d="M2.600 3.400A1.300 1.300 0 0 0 4.400 3.400L5.200 2.600A1.300 1.300 0 0 0 3.400 .8L2.900 1.300M3.400 2.600A1.300 1.300 0 0 0 1.600 2.600L.8 3.400A1.300 1.300 0 0 0 2.600 5.200L3.100 4.700" fill="none" stroke="#8a949a" stroke-width=".6"/></svg>
<div class="t" style="left:662px;top:140px;font-size:5.400px;color:#7b868c">分享連結</div>
<div class="a" style="left:652.500px;top:151.500px;width:104.500px;height:.5px;background:#e3e6e8"></div>
<div class="t b" style="left:652.600px;top:155.700px;font-size:5.600px">在裝置上預覽</div>
<div class="a" style="left:652.2px;top:171.8px;width:5.400px;height:5.400px;border-radius:.7px;background:#76828a"></div><div class="t" style="left:654.6px;top:171.2px;font-size:5.6px;font-weight:700;color:#fff;font-family:'Liberation Sans',sans-serif">f</div>
<div class="t" style="left:662px;top:170.500px;font-size:5.400px">傳送通知到 Facebook</div>
<div class="t" style="left:728.800px;top:170.500px;font-size:5.200px;color:#8a949a">(僅限 iOS)</div>
<svg style="left:652.1px;top:186.6px" width="5.6" height="5.6" viewBox="0 0 6 6"><rect x=".35" y=".35" width="5.3" height="5.3" rx="1.4" fill="none" stroke="#7b868c" stroke-width=".6"/><circle cx="3" cy="3" r="1.200" fill="none" stroke="#7b868c" stroke-width=".55"/></svg>
<div class="t" style="left:662px;top:185.400px;font-size:5.400px">動態廣告：發送通知至 Instagram</div>
<svg style="left:652.1px;top:201.3px" width="5.6" height="5.6" viewBox="0 0 6 6"><rect x=".35" y=".35" width="5.3" height="5.3" rx="1.4" fill="none" stroke="#7b868c" stroke-width=".6"/><circle cx="3" cy="3" r="1.200" fill="none" stroke="#7b868c" stroke-width=".55"/></svg>
<div class="t" style="left:662px;top:200.100px;font-size:5.400px">限時動態廣告：傳送通知至 Instagram</div>
<div class="a" style="left:650px;top:212px;width:107px;height:.5px;background:#e3e6e8"></div>
<div class="a" style="left:650.800px;top:215.100px;width:100.300px;height:40.200px;background:#fbe3ec"></div>
<div class="t" style="left:659px;top:228.500px;height:14px;line-height:14px;font-size:10.400px;color:#262626">有時候不會有這邊</div>
<div class="a" style="left:650px;top:257.700px;width:107px;height:.5px;background:#e3e6e8"></div>
<div class="t b" style="left:652.600px;top:261.800px;font-size:5.600px">在 Facebook 上查看</div>
<div class="a" style="left:652.2px;top:278.3px;width:5.400px;height:5.400px;border-radius:.7px;background:#76828a"></div><div class="t" style="left:654.6px;top:277.7px;font-size:5.6px;font-weight:700;color:#fff;font-family:'Liberation Sans',sans-serif">f</div>
<div class="t" style="left:662px;top:277px;font-size:5.400px">Facebook 桌面版動態消息</div>
<div class="a" style="left:652.2px;top:293.1px;width:5.400px;height:5.400px;border-radius:.7px;background:#76828a"></div><div class="t" style="left:654.6px;top:292.5px;font-size:5.6px;font-weight:700;color:#fff;font-family:'Liberation Sans',sans-serif">f</div>
<div class="t" style="left:662px;top:291.800px;font-size:5.400px">Facebook 行動版動態消息</div>
<svg style="left:652.200px;top:308px" width="5.600" height="5.600" viewBox="0 0 5.600 5.600"><path d="M.4 2.200L.9 .5H4.700L5.200 2.200ZM.8 2.200V5.100H4.800V2.200M.8 3.600H4.800M2.800 3.600V5.100" fill="none" stroke="#7b868c" stroke-width=".55"/></svg>
<div class="t" style="left:662px;top:306.800px;font-size:5.400px">Marketplace</div>
<!-- cursor -->
<svg style="left:644.500px;top:213px" width="3.600" height="5.200" viewBox="0 0 3.600 5.200"><path d="M.3 .3V4.300L1.300 3.400L2 4.900L2.700 4.600L2 3.200H3.300Z" fill="#fff" stroke="#555" stroke-width=".35"/></svg>
<!--DROPDOWN-->

<div class="a" style="left:639.200px;top:96.100px;width:38.500px;height:24px;border:.9px solid #e6262b;border-radius:11px/12px"></div>
<div class="t" style="left:684.400px;top:89.500px;height:14px;line-height:14px;font-size:14px;color:#e6262b;font-family:'Liberation Serif',serif">1</div>
<div class="a" style="left:644.800px;top:135.900px;width:58.600px;height:14.500px;border:.9px solid #e6262b;border-radius:7.200px"></div>
<div class="t" style="left:709.200px;top:145.700px;height:14px;line-height:14px;font-size:14px;color:#e6262b;font-family:'Liberation Serif',serif">2</div>
<!-- page scrollbar -->
<div class="a" style="left:790.500px;top:68px;width:9.500px;height:315px;background:rgba(255,255,255,.0)"></div>
<svg style="left:793.500px;top:70.500px" width="4.600" height="3" viewBox="0 0 4.600 3"><path d="M.2 2.800L2.300 .3L4.400 2.800Z" fill="#5c6469"/></svg>
<div class="a" style="left:794px;top:75px;width:4.200px;height:69px;border-radius:2.100px;background:#7d8388"></div>
<svg style="left:793.500px;top:378.800px" width="4.600" height="3" viewBox="0 0 4.600 3"><path d="M.2 .2L2.300 2.700L4.400 .2Z" fill="#5c6469"/></svg>
<!--ANNOT-->

<!-- ============ TASKBAR ============ -->
<div class="a" id="strip"></div>
<div class="a" id="taskbar"></div>

<svg style="left:290.500px;top:436px" width="10.200" height="9.800" viewBox="0 0 10.200 9.800"><defs><linearGradient id="gw" x1="0" y1="0" x2="1" y2="1"><stop offset="0" stop-color="#6fd3fb"/><stop offset="1" stop-color="#1f9ee8"/></linearGradient></defs><rect x="0" y="0" width="4.800" height="4.600" rx=".5" fill="url(#gw)"/><rect x="5.400" y="0" width="4.800" height="4.600" rx=".5" fill="url(#gw)"/><rect x="0" y="5.200" width="4.800" height="4.600" rx=".5" fill="url(#gw)"/><rect x="5.400" y="5.200" width="4.800" height="4.600" rx=".5" fill="url(#gw)"/></svg>
<div class="a" style="left:305.500px;top:433.800px;width:86px;height:13.500px;border-radius:6.750px;background:#3a3c38"></div>
<svg style="left:309.500px;top:437.500px" width="6.500" height="6.500" viewBox="0 0 6.500 6.500"><circle cx="2.700" cy="2.700" r="2" fill="none" stroke="#f0f0ee" stroke-width=".9"/><path d="M4.200 4.200L6 6" stroke="#f0f0ee" stroke-width="1"/></svg>
<div class="t" style="left:320px;top:436.800px;font-size:5.500px;color:#b4b6b2">搜尋</div>
<!-- sunflower -->
<svg style="left:395.500px;top:436px" width="10" height="10" viewBox="0 0 10 10"><ellipse cx="5" cy="1.700" rx="1.250" ry="1.700" fill="#f5b91a" transform="rotate(0 5 5)"/><ellipse cx="5" cy="1.700" rx="1.250" ry="1.700" fill="#f5b91a" transform="rotate(45 5 5)"/><ellipse cx="5" cy="1.700" rx="1.250" ry="1.700" fill="#f5b91a" transform="rotate(90 5 5)"/><ellipse cx="5" cy="1.700" rx="1.250" ry="1.700" fill="#f5b91a" transform="rotate(135 5 5)"/><ellipse cx="5" cy="1.700" rx="1.250" ry="1.700" fill="#f5b91a" transform="rotate(180 5 5)"/><ellipse cx="5" cy="1.700" rx="1.250" ry="1.700" fill="#f5b91a" transform="rotate(225 5 5)"/><ellipse cx="5" cy="1.700" rx="1.250" ry="1.700" fill="#f5b91a" transform="rotate(270 5 5)"/><ellipse cx="5" cy="1.700" rx="1.250" ry="1.700" fill="#f5b91a" transform="rotate(315 5 5)"/><circle cx="5" cy="5" r="2.500" fill="#e9a411"/><circle cx="5" cy="5" r="1.700" fill="#4a2b12"/></svg>
<!-- messenger -->
<div class="a" style="left:412.900px;top:436.300px;width:9.400px;height:9.400px;border-radius:50%;background:#3d57e0"></div>
<div class="a" style="left:414.800px;top:438.800px;width:5.600px;height:4px;border-radius:1.500px;background:#f2f4ff"></div>
<div class="a" style="left:415.800px;top:440.500px;width:3.600px;height:.7px;background:#3d57e0"></div>
<div class="a" style="left:419px;top:434px;width:5px;height:5px;border-radius:50%;background:#e0343a"></div>
<div class="a" style="left:416.500px;top:447.800px;width:2.500px;height:.8px;border-radius:.4px;background:#9a9c98"></div>
<!-- folder -->
<div class="a" style="left:430.300px;top:436.700px;width:4.500px;height:2px;border-radius:.6px .6px 0 0;background:#e9a920"></div>
<div class="a" style="left:430.300px;top:437.800px;width:9.800px;height:7.400px;border-radius:.8px;background:#f9cc44"></div>
<div class="a" style="left:431.500px;top:442.200px;width:7.400px;height:3px;background:#3a97e0"></div>
<!-- chrome -->
<div class="a" style="left:445.300px;top:433px;width:15.400px;height:15.500px;border-radius:2px;background:#30322e"></div>
<div class="a" style="left:447.800px;top:436.300px;width:9.400px;height:9.400px;border-radius:50%;background:conic-gradient(from -60deg,#e33b2e 0 120deg,#f7c51e 120deg 240deg,#2ea44f 240deg 360deg)"></div>
<div class="a" style="left:450.200px;top:438.700px;width:4.600px;height:4.600px;border-radius:50%;background:#fff"></div>
<div class="a" style="left:450.900px;top:439.400px;width:3.200px;height:3.200px;border-radius:50%;background:#3b7de9"></div>
<div class="a" style="left:455px;top:434.300px;width:4.400px;height:4.400px;border-radius:50%;background:#c9c9cf;border:.5px solid #30322e"></div>
<div class="a" style="left:450px;top:447.900px;width:5px;height:.9px;border-radius:.45px;background:#a89df2"></div>
<!-- line -->
<div class="a" style="left:465px;top:436.200px;width:9.800px;height:9.600px;border-radius:2.200px;background:#0ac755"></div>
<div class="a" style="left:466.700px;top:438.300px;width:6.400px;height:4.600px;border-radius:2.300px;background:#fff"></div>
<div class="a" style="left:467.900px;top:440.200px;width:4px;height:.8px;background:#0ac755"></div>
<!-- yt music -->
<div class="a" style="left:481.900px;top:436.200px;width:9.600px;height:9.600px;border-radius:50%;background:#e81f27"></div>
<div class="a" style="left:483.900px;top:438.200px;width:5.600px;height:5.600px;border-radius:50%;border:.6px solid #fff"></div>
<svg style="left:485.800px;top:439.600px" width="2.600" height="2.800" viewBox="0 0 2.600 2.800"><path d="M.2 .2L2.400 1.400L.2 2.600Z" fill="#fff"/></svg>
<!-- obs -->
<div class="a" style="left:499.100px;top:436.300px;width:9.400px;height:9.400px;border-radius:50%;background:#2b2b2b;border:.8px solid #c9c9c9"></div>
<div class="a" style="left:501.600px;top:438.800px;width:4.400px;height:4.400px;border-radius:50%;border:.8px solid #d8d8d8"></div>
<div class="a" style="left:505.200px;top:434.200px;width:4.600px;height:4.600px;border-radius:50%;background:#e3272d"></div>
<div class="a" style="left:502.600px;top:447.800px;width:2.500px;height:.8px;border-radius:.4px;background:#9a9c98"></div>
<!-- tray -->
<svg style="left:682px;top:439px" width="5.200" height="3.200" viewBox="0 0 5.200 3.200"><path d="M.4 2.800L2.600 .6L4.800 2.800" fill="none" stroke="#f2f2f0" stroke-width=".8"/></svg>
<div class="a" style="left:694.700px;top:436.800px;width:5.300px;height:8.400px;border-radius:2.600px;background:#2f8fe8"></div>
<svg style="left:695.800px;top:438.200px" width="3.200" height="5.600" viewBox="0 0 3.200 5.600"><path d="M.4 1.600L2.700 3.900L1.600 5.100V.5L2.700 1.700L.4 4" fill="none" stroke="#fff" stroke-width=".5"/></svg>
<svg style="left:706.500px;top:437.200px" width="5" height="7.600" viewBox="0 0 5 7.600"><rect x="1.500" y=".3" width="2" height="4.200" rx="1" fill="#c9cbc8"/><path d="M.5 3.600C.5 6 4.500 6 4.500 3.600M2.500 5.500V7.300" fill="none" stroke="#c9cbc8" stroke-width=".6"/></svg>
<div class="t" style="left:718.700px;top:437px;font-size:6.400px;color:#f0f0ee">英</div>
<div class="t" style="left:734.500px;top:437px;font-size:6.400px;color:#f0f0ee">ㄅ</div>
<svg style="left:748.300px;top:437px" width="7.200" height="8" viewBox="0 0 7.200 8"><rect x=".5" y=".5" width="6.200" height="6" rx=".8" fill="none" stroke="#f0f0ee" stroke-width=".8"/><rect x="3.600" y="3.400" width="3.100" height="3.100" fill="#f0f0ee"/></svg>
<svg style="left:757.500px;top:438.200px" width="6" height="5.600" viewBox="0 0 6 5.600"><path d="M.4 2H1.600L3.200 .6V5L1.600 3.600H.4Z" fill="#f0f0ee"/><path d="M4.200 1.600C5 2.300 5 3.300 4.200 4" fill="none" stroke="#8e908c" stroke-width=".6"/></svg>
<div class="t" style="left:752px;width:40.200px;text-align:right;top:434.300px;font-size:4.700px;color:#f4f4f2">下午 11:00</div>
<div class="t" style="left:752px;width:40.200px;text-align:right;top:440px;font-size:4.700px;color:#f4f4f2">2025/9/7</div>
<!--TASKBAR-->
</div>
</body>
</html>
